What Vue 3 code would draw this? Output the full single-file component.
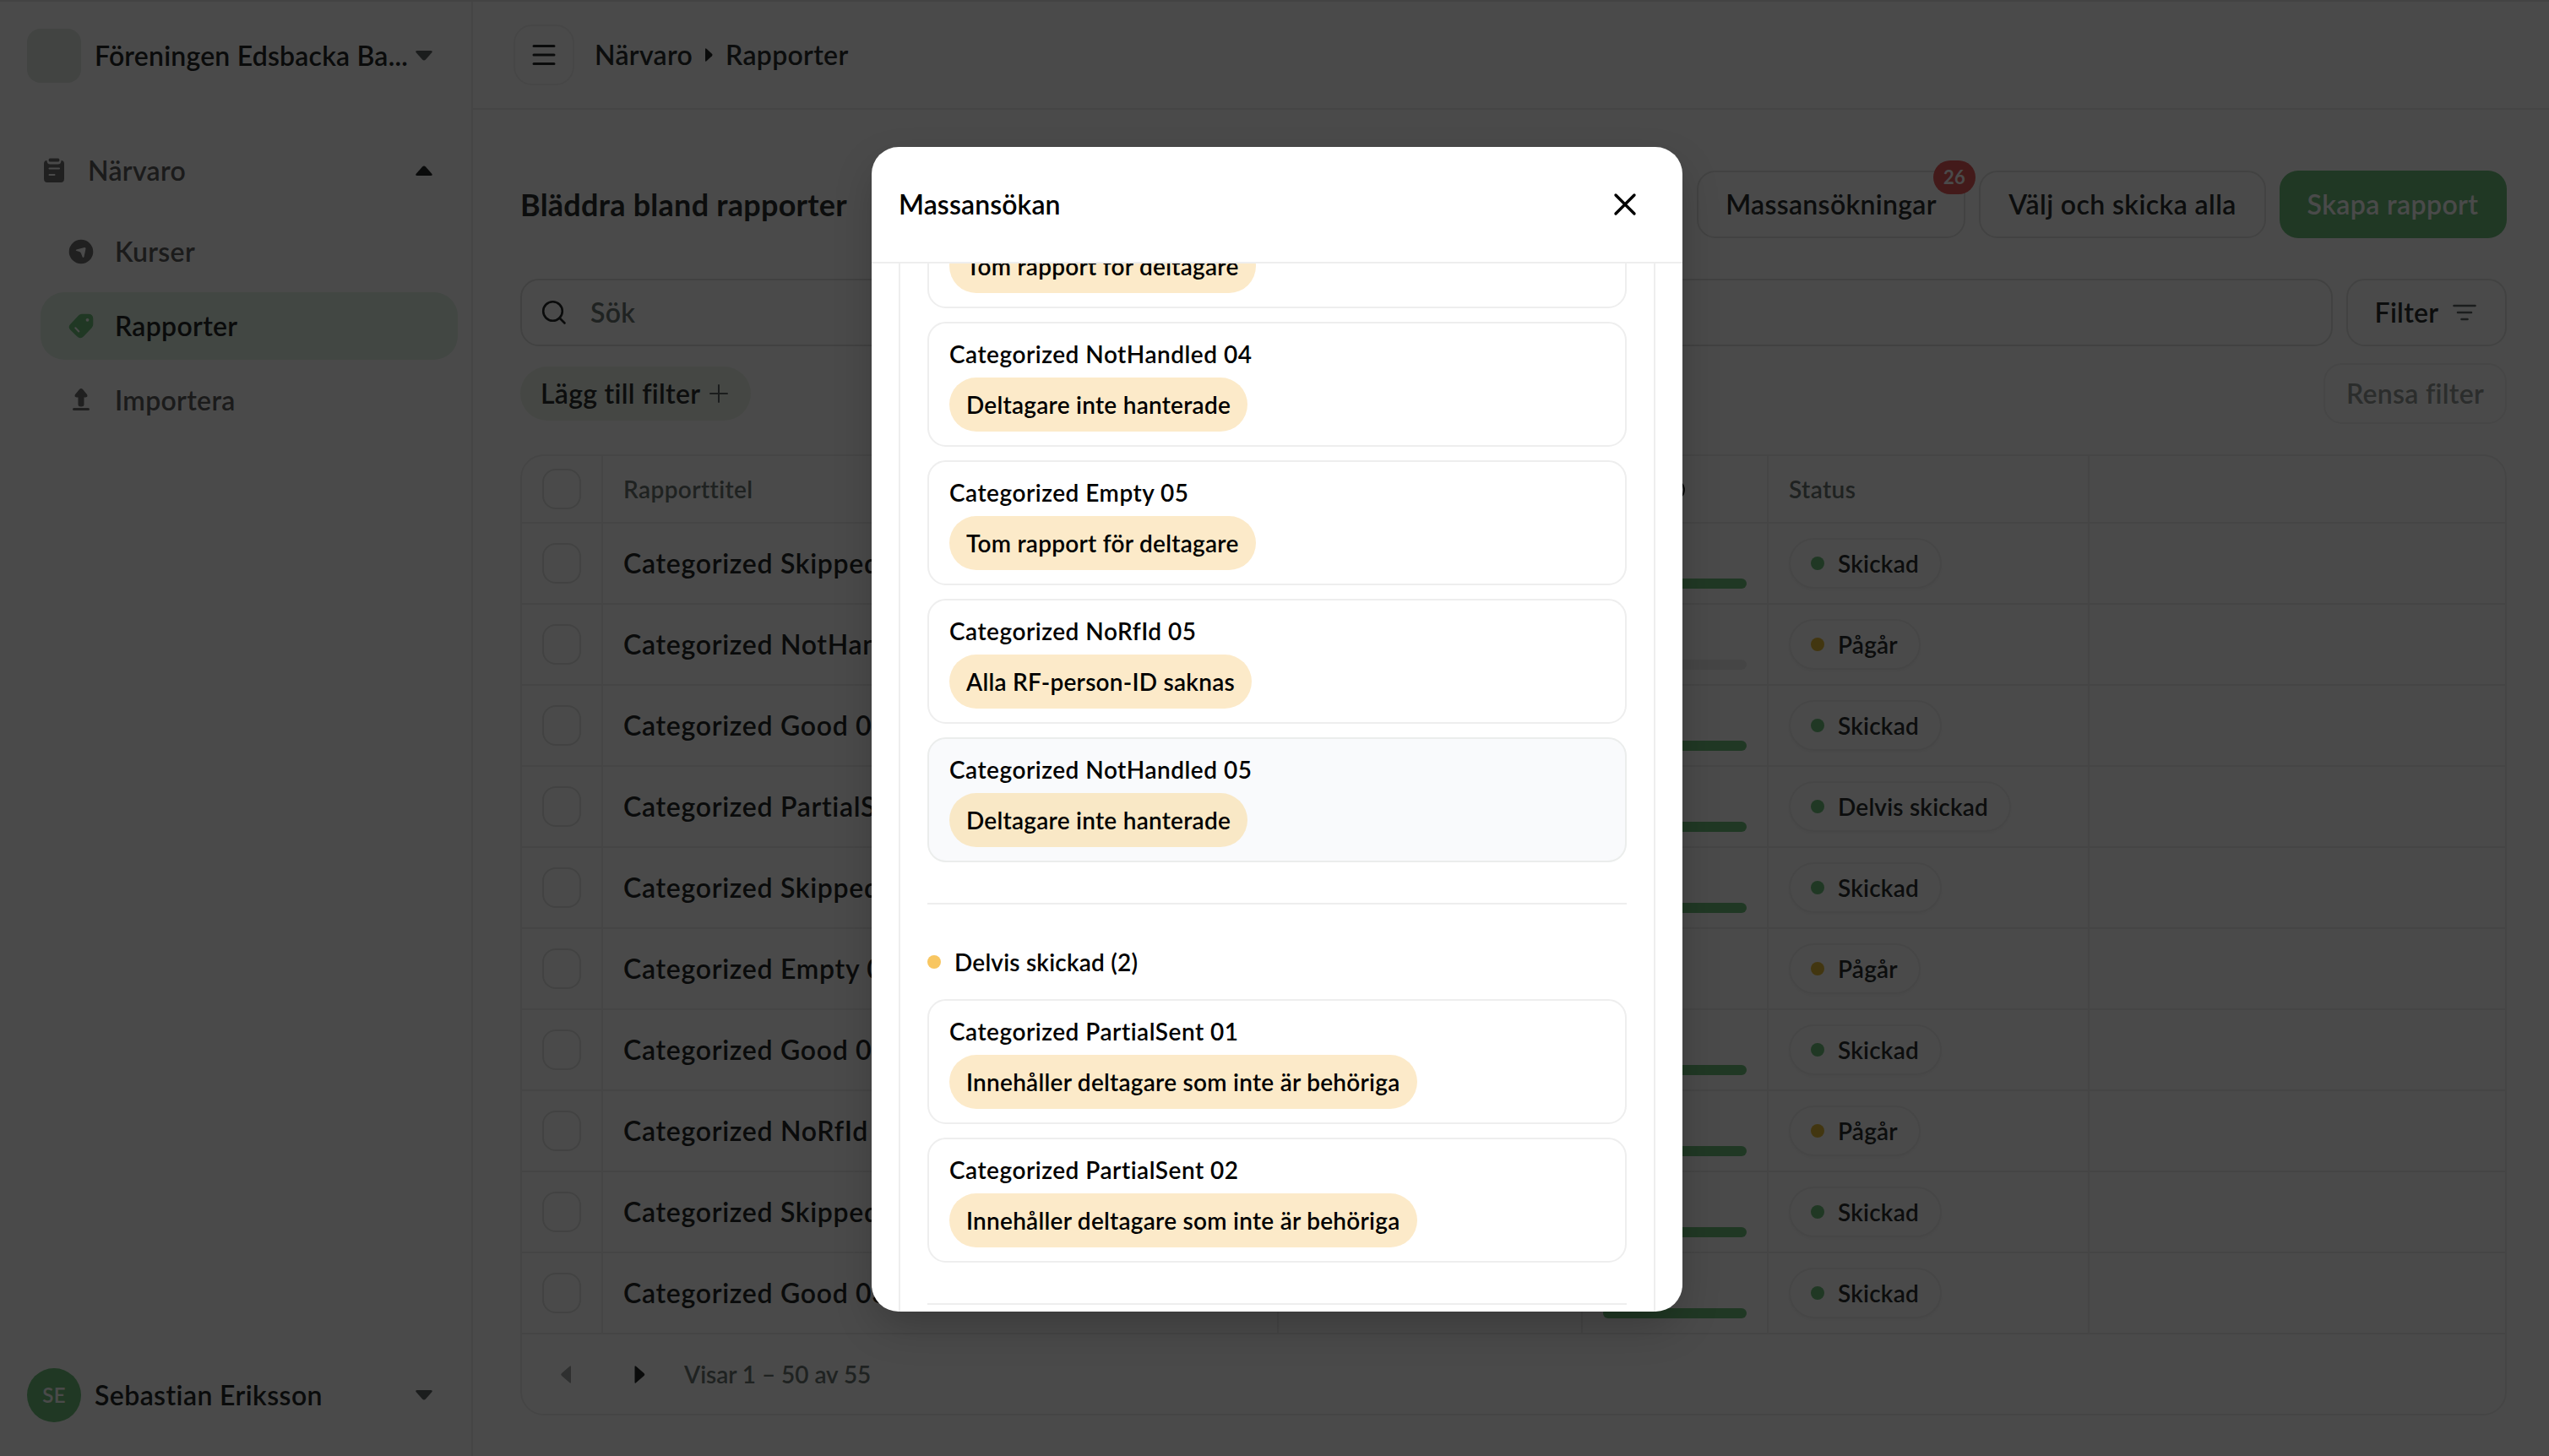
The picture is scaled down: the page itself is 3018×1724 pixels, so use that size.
<template>
  <div class="page">
    <aside class="sidebar">
      <div class="org">
        <span class="org-logo"></span>
        <span class="org-name">Föreningen Edsbacka Ba...</span>
        <svg class="caret" viewBox="0 0 20 12"><path d="M2 0h16q2.500 0 1.500 2L12 10.500q-2 2-4 0L.500 2Q-.500 0 2 0z" /></svg>
      </div>
      <nav class="nav">
        <div class="nav-group">
          <svg class="icon" viewBox="0 0 32 32">
            <path d="M10 1.500h12q2 0 2 2v1q0 2-2 2H10q-2 0-2-2v-1q0-2 2-2z" transform="translate(3.200 .400) scale(.8)" />
            <path d="M7.500 4Q4 4 4 8v17.500Q4 30 8 30h16q4 0 4-4.500V8q0-4-3.500-4-.200 4.500-4 4.500h-9Q7.700 8.500 7.500 4z" />
            <path class="cut" d="M10.500 13.500h11.500M10.500 21h6" />
          </svg>
          <span>Närvaro</span>
          <svg class="caret dark" viewBox="0 0 20 12"><path d="M2 12h16q2.500 0 1.500-2L12 1.500q-2-2-4 0L.500 10Q-.500 12 2 12z" /></svg>
        </div>
        <div v-for="item in menu" :key="item.name" class="nav-item" :class="{ active: item.active }">
          <svg v-if="item.icon === 'compass'" class="icon" viewBox="0 0 32 32">
            <circle cx="16" cy="16" r="14.300" />
            <path class="hole" d="M10.500 13.500 20 11q1.800-.300 1.500 1.500L19.500 22q-.800 2-2 0l-1.500-4q-.500-1.500-2-2l-3.500-1q-1.500-1 0-1.500z" />
          </svg>
          <svg v-if="item.icon === 'tag'" class="icon" viewBox="0 0 32 32">
            <path d="M17 1.800h7.500q5.800 0 5.800 5.800v6.400q0 2.500-1.700 4.300l-9.500 10q-4 4-8 0l-7.700-7.500q-3.500-3.500 0-7L13 3.500q1.700-1.700 4-1.700z" />
            <circle class="hole" cx="23.500" cy="8.800" r="1.900" />
            <path class="cut" d="m9.300 18.300 4 4.200" />
          </svg>
          <svg v-if="item.icon === 'upload'" class="icon" viewBox="0 0 32 32">
            <path d="M12.500 21V12.500H10.500Q7.500 12 9 9l5-6q2-2 4 0l5 6q1.500 3-1.500 3.500H19.500V21q0 2.500-3.500 2.500T12.500 21z" />
            <path class="line" d="M7.500 26.500h17" />
          </svg>
          <span>{{ item.name }}</span>
        </div>
      </nav>
      <div class="user">
        <span class="avatar">SE</span>
        <span class="user-name">Sebastian Eriksson</span>
        <svg class="caret" viewBox="0 0 20 12"><path d="M2 0h16q2.500 0 1.500 2L12 10.500q-2 2-4 0L.500 2Q-.500 0 2 0z" /></svg>
      </div>
    </aside>

    <main class="main">
      <header class="topbar">
        <button class="menu-button">
          <svg width="28" height="28" viewBox="0 0 28 28"><path d="M2 3.500h24M2 14h24M2 24.500h24" /></svg>
        </button>
        <span>Närvaro</span>
        <svg class="crumb-arrow" width="9" height="16" viewBox="0 0 9 16"><path d="M0 1.500Q0-.500 1.500.800l6.500 6q1 1.200 0 2.400l-6.500 6Q0 16.500 0 14.500z" /></svg>
        <span>Rapporter</span>
      </header>

      <section class="content">
        <div class="title-row">
          <h1>Bläddra bland rapporter</h1>
          <button class="btn btn-mass">Massansökningar<span class="badge">26</span></button>
          <button class="btn btn-send">Välj och skicka alla</button>
          <button class="btn btn-create">Skapa rapport</button>
        </div>
        <div class="search-row">
          <div class="search">
            <svg width="30" height="30" viewBox="0 0 30 30"><circle cx="13.500" cy="13.500" r="11.300" /><path d="m21.500 21.500 6 6" /></svg>
            <span>Sök</span>
          </div>
          <button class="btn btn-filter">Filter
            <svg width="28" height="20" viewBox="0 0 28 20"><path d="M1.500 2h25M6 10h16M10.500 18h7" /></svg>
          </button>
        </div>
        <div class="filter-row">
          <span class="add-filter">Lägg till filter
            <svg width="22" height="22" viewBox="0 0 22 22"><path d="M11 1v20M1 11h20" /></svg>
          </span>
          <button class="btn btn-clear">Rensa filter</button>
        </div>

        <div class="table">
          <div class="row head">
            <div class="cell"><span class="checkbox"></span></div>
            <div class="cell">Rapporttitel</div>
            <div class="cell"></div>
            <div class="cell">
              <svg class="info" width="24" height="24" viewBox="0 0 24 24"><circle cx="12" cy="12" r="11" /><path d="M12 11v6M12 7v1" /></svg>
            </div>
            <div class="cell">Status</div>
            <div class="cell"></div>
          </div>
          <div v-for="(row, i) in rows" :key="i" class="row">
            <div class="cell"><span class="checkbox"></span></div>
            <div class="cell name">{{ row.title }}</div>
            <div class="cell"></div>
            <div class="cell progress"><span v-if="row.bar" class="bar" :class="row.bar"></span></div>
            <div class="cell">
              <span class="status"><i class="dot" :class="{ pending: row.status === 'Pågår' }"></i>{{ row.status }}</span>
            </div>
            <div class="cell"></div>
          </div>
          <div class="pager">
            <svg class="muted" width="12" height="21" viewBox="0 0 12 21"><path d="M12 1.500Q12-.500 10.500.800L1 9q-1.500 1.500 0 3l9.500 8.200q1.500 1.300 1.500-.700z" /></svg>
            <svg class="next" width="13" height="21" viewBox="0 0 12 21"><path d="M0 1.500Q0-.500 1.500.800L11 9q1.500 1.500 0 3l-9.500 8.200Q0 21.500 0 19.500z" /></svg>
            <span>Visar 1 – 50 av 55</span>
          </div>
        </div>
      </section>
    </main>

    <div class="backdrop"></div>

    <div class="modal">
      <div class="modal-header">
        <span>Massansökan</span>
        <svg width="28" height="28" viewBox="0 0 28 28"><path d="m3 3 22 22M25 3 3 25" /></svg>
      </div>
      <div class="modal-body">
        <div class="modal-inner">
          <div v-for="(item, i) in unhandled" :key="i" class="card" :class="{ hover: item.hover }">
            <div class="card-title">{{ item.title }}</div>
            <span class="chip">{{ item.reason }}</span>
          </div>
          <hr>
          <div class="group-title"><i></i>Delvis skickad (2)</div>
          <div v-for="item in partial" :key="item.title" class="card">
            <div class="card-title">{{ item.title }}</div>
            <span class="chip">{{ item.reason }}</span>
          </div>
          <hr>
        </div>
      </div>
    </div>
  </div>
</template>

<script setup>
const menu = [
  { name: 'Kurser', icon: 'compass' },
  { name: 'Rapporter', icon: 'tag', active: true },
  { name: 'Importera', icon: 'upload' },
]

const rows = [
  { title: 'Categorized Skipped 05', status: 'Skickad', bar: 'full' },
  { title: 'Categorized NotHandled 05', status: 'Pågår', bar: 'empty' },
  { title: 'Categorized Good 05', status: 'Skickad', bar: 'full' },
  { title: 'Categorized PartialSent 02', status: 'Delvis skickad', bar: 'full' },
  { title: 'Categorized Skipped 04', status: 'Skickad', bar: 'full' },
  { title: 'Categorized Empty 05', status: 'Pågår', bar: '' },
  { title: 'Categorized Good 04', status: 'Skickad', bar: 'full' },
  { title: 'Categorized NoRfId 05', status: 'Pågår', bar: 'full' },
  { title: 'Categorized Skipped 03', status: 'Skickad', bar: 'full' },
  { title: 'Categorized Good 03', status: 'Skickad', bar: 'full' },
]

const unhandled = [
  { title: '', reason: 'Tom rapport för deltagare' },
  { title: 'Categorized NotHandled 04', reason: 'Deltagare inte hanterade' },
  { title: 'Categorized Empty 05', reason: 'Tom rapport för deltagare' },
  { title: 'Categorized NoRfId 05', reason: 'Alla RF-person-ID saknas' },
  { title: 'Categorized NotHandled 05', reason: 'Deltagare inte hanterade', hover: true },
]

const partial = [
  { title: 'Categorized PartialSent 01', reason: 'Innehåller deltagare som inte är behöriga' },
  { title: 'Categorized PartialSent 02', reason: 'Innehåller deltagare som inte är behöriga' },
]
</script>

<style>
body {
  margin: 0;
  overflow: hidden;
}
</style>

<style scoped>
.page {
  position: relative;
  display: flex;
  width: 3018px;
  height: 1724px;
  box-sizing: border-box;
  border-top: 2px solid #e8e8e8;
  background: #fff;
  font-family: Lato, "Liberation Sans", sans-serif;
  font-size: 32px;
  font-weight: 600;
  letter-spacing: 0.3px;
  line-height: 40px;
  color: #2a2f2f;
  white-space: nowrap;
}
.page * {
  box-sizing: border-box;
}
button {
  font: inherit;
  letter-spacing: inherit;
  color: inherit;
}
svg {
  flex: none;
}

/* sidebar */
.sidebar {
  display: flex;
  flex-direction: column;
  flex: none;
  width: 560px;
  border-right: 2px solid #eee;
  padding: 32px 16px 40px 32px;
}
.org,
.user {
  display: flex;
  align-items: center;
  height: 64px;
  padding-right: 30px;
}
.org-logo {
  width: 64px;
  height: 64px;
  border-radius: 16px;
  background: #e2e9e3;
}
.org-name,
.user-name {
  flex: 1;
  margin-left: 16px;
  color: #242828;
}
.org-name {
  letter-spacing: 0.2px;
}
.user-name {
  letter-spacing: 0.4px;
}
.caret {
  width: 20px;
  height: 12px;
  fill: #5f6464;
}
.caret.dark {
  fill: #242828;
  margin-left: auto;
}
.nav {
  flex: 1;
  display: flex;
  flex-direction: column;
  gap: 8px;
  margin-top: 64px;
}
.nav-group,
.nav-item {
  display: flex;
  align-items: center;
  height: 80px;
  color: #5d5d5d;
}
.nav-group {
  margin: 0 0 8px 16px;
  padding-right: 30px;
}
.nav-item {
  margin-left: 16px;
  padding-left: 32px;
  border-radius: 28px;
}
.nav-item.active {
  background: #e4f3e7;
  color: #242828;
}
.icon {
  width: 32px;
  height: 32px;
  margin-right: 24px;
  fill: #6f6f6f;
}
.active .icon {
  fill: #6ec17c;
}
.icon .cut {
  fill: none;
  stroke: #fff;
  stroke-width: 2;
  stroke-linecap: round;
}
.icon .hole {
  fill: #fff;
}
.icon .line {
  fill: none;
  stroke: #6f6f6f;
  stroke-width: 3;
  stroke-linecap: round;
}
.avatar {
  width: 64px;
  height: 64px;
  border-radius: 50%;
  background: #6ec17c;
  color: #fff;
  font-size: 24px;
  line-height: 63px;
  text-align: center;
}

/* top bar */
.main {
  flex: 1;
}
.topbar {
  display: flex;
  align-items: center;
  height: 128px;
  padding-left: 48px;
  border-bottom: 2px solid #eee;
}
.menu-button {
  display: flex;
  align-items: center;
  justify-content: center;
  width: 72px;
  height: 72px;
  margin-right: 24px;
  padding: 0;
  border: 2px solid #f2f2f2;
  border-radius: 22px;
  background: none;
}
.menu-button svg {
  fill: none;
  stroke: #242828;
  stroke-width: 3;
  stroke-linecap: round;
}
.crumb-arrow {
  margin: 0 15px 0 15px;
  fill: #242828;
}

/* toolbar */
.content {
  padding: 72px 50px 0 56px;
}
.title-row,
.search-row,
.filter-row {
  display: flex;
  align-items: center;
  gap: 16px;
}
h1 {
  flex: 1;
  margin: 0;
  font-size: 36px;
  font-weight: 700;
  letter-spacing: 0.25px;
}
.btn {
  display: flex;
  align-items: center;
  justify-content: center;
  flex: none;
  height: 80px;
  padding: 0;
  border: 2px solid #e2e4e2;
  border-radius: 22px;
  background: none;
}
.btn-mass {
  position: relative;
  width: 318px;
}
.btn-send {
  width: 340px;
  letter-spacing: 0.4px;
}
.btn-create {
  width: 269px;
  padding-right: 1px;
  border: 0;
  background: #6ec17c;
  color: #fff;
  letter-spacing: 0.4px;
}
.badge {
  position: absolute;
  top: -14px;
  right: -14px;
  width: 50px;
  height: 40px;
  border-radius: 20px;
  background: #e75a5a;
  color: #fff;
  font-size: 22px;
  font-weight: 700;
  line-height: 39px;
  text-align: center;
}
.search-row {
  margin-top: 48px;
}
.search {
  display: flex;
  align-items: center;
  flex: 1;
  height: 80px;
  padding-left: 23px;
  border: 2px solid #dfe1df;
  border-radius: 22px;
  color: #6b7672;
}
.search svg {
  margin-right: 28px;
  fill: none;
  stroke: #242828;
  stroke-width: 2.6;
  stroke-linecap: round;
}
.btn-filter {
  width: 190px;
  padding-right: 2px;
}
.btn-filter svg {
  margin-left: 17px;
  stroke: #5f6464;
  stroke-width: 2.6;
  stroke-linecap: round;
}
.filter-row {
  justify-content: space-between;
  margin-top: 20px;
}
.add-filter {
  display: flex;
  align-items: center;
  width: 273px;
  height: 64px;
  padding-left: 24px;
  border-radius: 32px;
  background: #edf5ea;
}
.add-filter svg {
  margin-left: 11px;
  stroke: #5f6464;
  stroke-width: 2;
  stroke-linecap: round;
}
.btn-clear {
  width: 217px;
  height: 72px;
  border-color: #f0f0f0;
  color: #959a98;
}

/* table */
.table {
  margin-top: 36px;
  border: 2px solid #eee;
  border-radius: 28px;
}
.row {
  display: grid;
  grid-template-columns: 96px 800px 360px 220px 380px 1fr;
  height: 96px;
  border-bottom: 2px solid #eee;
}
.row.head {
  height: 80px;
  font-size: 28px;
  letter-spacing: 0.4px;
  color: #6b7672;
}
.cell {
  display: flex;
  align-items: center;
  padding: 0 24px;
  border-right: 2px solid #eee;
}
.cell:last-child {
  border-right: 0;
}
.checkbox {
  width: 48px;
  height: 48px;
  border: 2px solid #e2e4e2;
  border-radius: 16px;
}
.name {
  color: #242828;
  letter-spacing: 0.7px;
}
.info {
  margin: 2px 0 0 73px;
  fill: none;
  stroke: #242828;
  stroke-width: 2;
}
.cell.progress {
  align-items: flex-end;
  padding-bottom: 17px;
}
.bar {
  flex: 1;
  height: 12px;
  border-radius: 6px;
}
.bar.full {
  background: #6ec17c;
}
.bar.empty {
  background: #eee;
}
.status {
  display: flex;
  align-items: center;
  height: 60px;
  padding: 0 25px 0 24px;
  border: 2px solid #f0f0f0;
  border-radius: 30px;
  box-shadow: 0 2px 4px rgba(0, 0, 0, 0.04);
  font-size: 28px;
  letter-spacing: 0.2px;
}
.dot {
  width: 16px;
  height: 16px;
  margin-right: 16px;
  border-radius: 50%;
  background: #6ec17c;
}
.dot.pending {
  background: #e4ba37;
}
.pager {
  display: flex;
  align-items: center;
  height: 94px;
  padding-left: 46px;
  font-size: 28px;
  letter-spacing: -0.05px;
  color: #6b7672;
}
.pager .muted {
  fill: #a3a6a5;
}
.pager .next {
  margin: 0 46px 0 75px;
  fill: #242828;
}

/* modal */
.backdrop {
  position: absolute;
  inset: -2px 0 0;
  background: rgba(0, 0, 0, 0.71);
}
.modal {
  position: absolute;
  top: 172px;
  left: 1032px;
  display: flex;
  flex-direction: column;
  width: 960px;
  height: 1379px;
  border-radius: 32px;
  background: #fff;
  box-shadow: 0 20px 50px -8px rgba(0, 0, 0, 0.25);
  overflow: hidden;
  color: #000;
}
.modal-header {
  display: flex;
  align-items: center;
  justify-content: space-between;
  flex: none;
  height: 138px;
  padding: 0 54px 0 32px;
  border-bottom: 2px solid #eee;
  letter-spacing: 0.1px;
}
.modal-header svg {
  fill: none;
  stroke: #000;
  stroke-width: 3.4;
  stroke-linecap: round;
}
.modal-body {
  flex: 1;
  padding: 0 32px;
  overflow: hidden;
}
/* list is scrolled, the first card is partly above the edge */
.modal-inner {
  margin-top: -95px;
  padding: 0 32px 48px;
  border: solid #eee;
  border-width: 0 2px;
  font-size: 28px;
  letter-spacing: 0.5px;
}
.card {
  height: 148px;
  margin-bottom: 16px;
  padding: 16px 24px;
  border: 2px solid #eee;
  border-radius: 22px;
}
.card.hover {
  background: #f9fafc;
  border-color: #ebedec;
}
.card-title {
  height: 40px;
  margin-bottom: 8px;
}
.chip {
  display: inline-block;
  height: 64px;
  padding: 0 20px;
  border-radius: 32px;
  background: #fceac9;
  letter-spacing: 0.25px;
  line-height: 64px;
}
.hover .chip {
  background: #f9e8c6;
}
hr {
  height: 2px;
  margin: 48px 0;
  border: 0;
  background: #eee;
}
.group-title {
  display: flex;
  align-items: center;
  height: 40px;
  margin-bottom: 24px;
  letter-spacing: 0.2px;
}
.group-title i {
  width: 16px;
  height: 16px;
  margin-right: 16px;
  border-radius: 50%;
  background: #f8c661;
}
</style>
